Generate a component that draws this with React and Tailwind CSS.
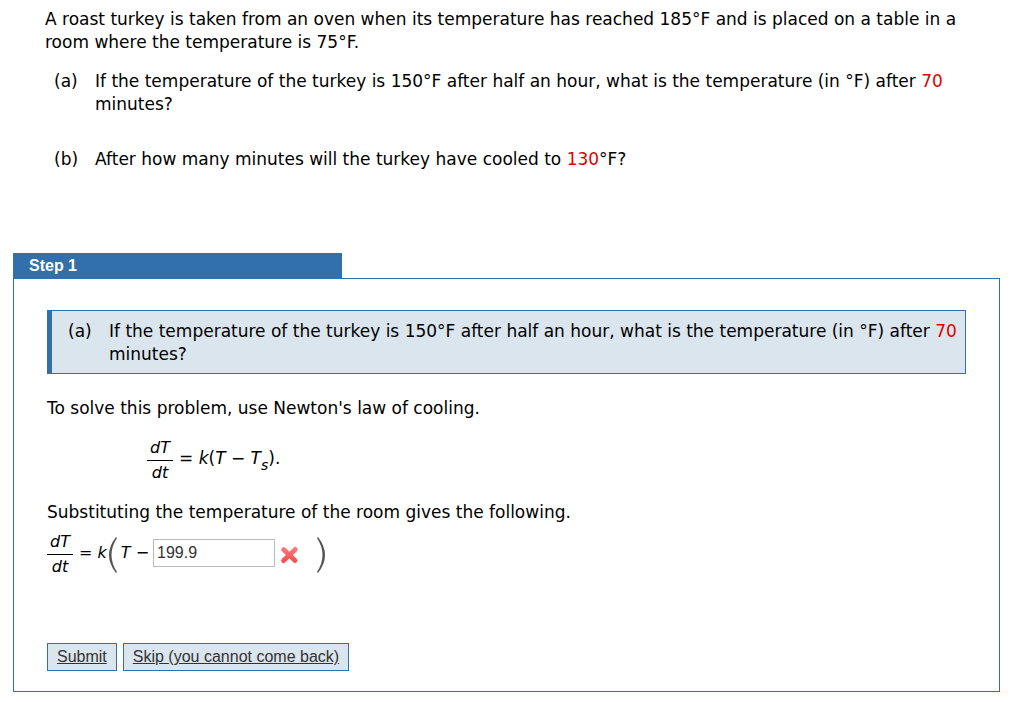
import { useState } from 'react';

function Red({ children }) {
  return <span className="text-[#e00000]">{children}</span>;
}

function Part({ label, children }) {
  return (
    <div className="flex">
      <span className="w-[41px] shrink-0">{label}</span>
      <p>{children}</p>
    </div>
  );
}

function PartA() {
  return (
    <Part label="(a)">
      If the temperature of the turkey is 150°F after half an hour, what is the
      temperature (in °F) after <Red>70</Red> minutes?
    </Part>
  );
}

function Derivative() {
  return (
    <span className="flex w-[26px] flex-col text-center text-base italic">
      <span className="border-b border-black leading-6">dT</span>
      <span className="leading-6">dt</span>
    </span>
  );
}

function Paren({ d }) {
  return (
    <svg width="10" height="36" viewBox="0 0 10 36" aria-hidden="true">
      <path d={d} fill="#555555" />
    </svg>
  );
}

function WrongMark() {
  return (
    <svg width="19" height="18" viewBox="0 0 19 18" role="img" aria-label="Incorrect">
      <defs>
        <linearGradient id="wrong" x1="0" y1="0" x2="0" y2="18" gradientUnits="userSpaceOnUse">
          <stop offset="0" stopColor="#ff8080" />
          <stop offset="1" stopColor="#f54545" />
        </linearGradient>
      </defs>
      <path
        d="M3.6 3.6 15 14.4M15.2 3.4 3.6 14.6"
        fill="none"
        stroke="url(#wrong)"
        strokeWidth="4.8"
        strokeLinecap="round"
      />
    </svg>
  );
}

const buttonClass =
  'h-7 border border-[#3270ac] bg-[#dae5ee] px-[9px] font-[Liberation_Sans,sans-serif] text-base leading-6 text-[#333333] underline';

export default function App() {
  const [answer, setAnswer] = useState('199.9');

  return (
    <main className="bg-white pt-2 pr-6 pb-[11px] pl-[13px] font-[Verdana,DejaVu_Sans,sans-serif] text-[17px] leading-[23px] text-black">
      <section className="pr-10 pl-8">
        <p>
          A roast turkey is taken from an oven when its temperature has reached
          185°F and is placed on a table in a room where the temperature is 75°F.
        </p>
        <div className="mt-4 flex flex-col gap-8 pl-[9px]">
          <PartA />
          <Part label="(b)">
            After how many minutes will the turkey have cooled to <Red>130</Red>°F?
          </Part>
        </div>
      </section>

      <section className="mt-[82px]">
        <h2 className="h-[25px] w-1/3 bg-[#3270ac] px-4 font-[Liberation_Sans,sans-serif] text-base leading-[26px] font-bold text-white">
          Step 1
        </h2>
        <div className="border border-[#3270ac] px-[33px] pt-[31px] pb-5">
          <div className="border border-l-[5px] border-[#3270ac] bg-[#dae5ee] pt-[9px] pr-1 pb-[7px] pl-4">
            <PartA />
          </div>

          <p className="mt-[23px]">To solve this problem, use Newton's law of cooling.</p>

          <div className="mt-4 ml-[100px] flex items-center gap-[6px]">
            <Derivative />
            <span className="pb-1">
              = <i>k</i>(<i>T</i> − <i>T</i>
              <sub className="-bottom-[6px] text-sm"><i>s</i></sub>).
            </span>
          </div>

          <p className="mt-4">Substituting the temperature of the room gives the following.</p>

          <div className="mt-[6px] flex items-center">
            <Derivative />
            <label htmlFor="answer" className="flex items-center pl-[6px] text-base">
              <span className="pb-1">
                = <i>k</i>
              </span>
              <Paren d="M9 0Q-5 18 9 36L10 35Q-1 18 10 1Z" />
              <span className="px-1 pb-1">
                <i>T</i> −
              </span>
            </label>
            <span className="pb-1">
              <input
                id="answer"
                value={answer}
                onChange={(e) => setAnswer(e.target.value)}
                className="block h-7 w-[122px] border border-[#bbbbbb] bg-white px-[3px] font-[Liberation_Sans,sans-serif] text-base text-[#333333] outline-none"
              />
            </span>
            <span className="flex items-center gap-[18px] pl-[5px]">
              <WrongMark />
              <Paren d="M1 0Q15 18 1 36L0 35Q11 18 0 1Z" />
            </span>
          </div>

          <div className="mt-16 flex gap-[6px]">
            <button type="button" className={buttonClass}>Submit</button>
            <button type="button" className={buttonClass}>Skip (you cannot come back)</button>
          </div>
        </div>
      </section>
    </main>
  );
}
